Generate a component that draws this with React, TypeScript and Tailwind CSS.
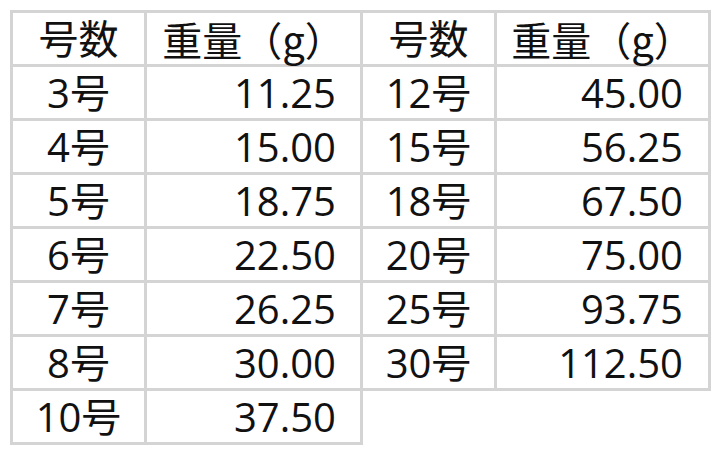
const left: [string, string][] = [
  ["3号", "11.25"],
  ["4号", "15.00"],
  ["5号", "18.75"],
  ["6号", "22.50"],
  ["7号", "26.25"],
  ["8号", "30.00"],
  ["10号", "37.50"],
];

const right: [string, string][] = [
  ["12号", "45.00"],
  ["15号", "56.25"],
  ["18号", "67.50"],
  ["20号", "75.00"],
  ["25号", "93.75"],
  ["30号", "112.50"],
];

function WeightTable({ rows, first }: { rows: [string, string][]; first?: boolean }) {
  return (
    <div
      className={
        "flex flex-col self-start border-t-[3px] border-[#d4d4d4] " +
        (first ? "border-l-[3px]" : "")
      }
    >
      <div className="flex h-[54px]">
        <div className="flex w-[134px] items-center justify-center border-r-[3px] border-b-[3px] border-[#d4d4d4]">
          号数
        </div>
        <div
          className={
            "flex items-center justify-center border-r-[3px] border-b-[3px] border-[#d4d4d4] font-['Noto_Sans_CJK_JP',sans-serif] " +
            (first ? "w-[216px]" : "w-[214px]")
          }
        >
          重量（g）
        </div>
      </div>
      {rows.map(([size, weight]) => (
        <div key={size} className="flex h-[54px]">
          <div className="flex w-[134px] items-center justify-center border-r-[3px] border-b-[3px] border-[#d4d4d4]">
            {size}
          </div>
          <div
            className={
              "flex items-center justify-end border-r-[3px] border-b-[3px] border-[#d4d4d4] " +
              (first ? "w-[216px] pr-[24px]" : "w-[214px] pr-[25px]")
            }
          >
            {weight}
          </div>
        </div>
      ))}
    </div>
  );
}

export default function App() {
  return (
    <div className="h-[456px] w-[720px] overflow-hidden bg-white pl-[10px] pt-[10px] font-['Open_Sans','Noto_Sans_CJK_JP',sans-serif] text-[40px] leading-none text-[#111]">
      <div className="flex">
        <WeightTable rows={left} first />
        <WeightTable rows={right} />
      </div>
    </div>
  );
}
